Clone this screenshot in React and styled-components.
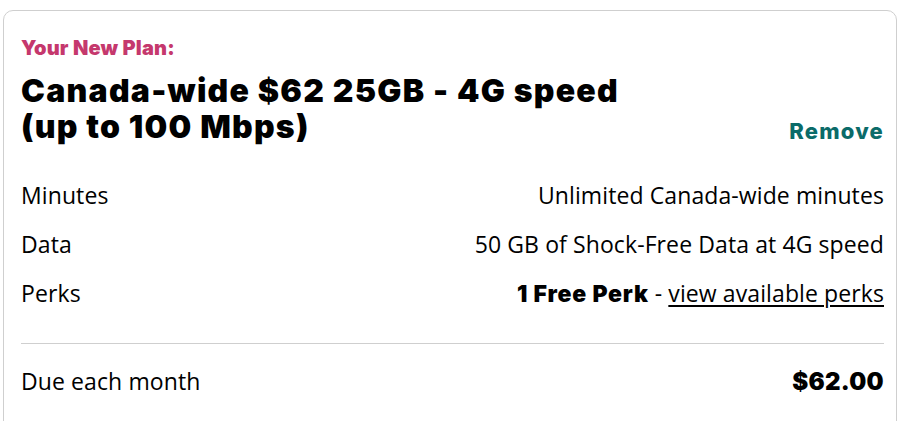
import React from "react";
import styled, { createGlobalStyle } from "styled-components";

const Global = createGlobalStyle`
  html, body { margin: 0; padding: 0; background: #fff; }
  body { font-family: "Open Sans", "Noto Sans", sans-serif; color: #000; overflow: hidden; }
`;

const heavy = `"Inter", "Noto Sans", sans-serif`;

const Card = styled.section`
  margin: 10px 0 0 3px;
  width: 894px;
  box-sizing: border-box;
  border: 1px solid #cfcfcf;
  border-radius: 10px;
  padding: 26px 12px 30px 17px;
  height: 430px;
`;

const Eyebrow = styled.div`
  color: #c5386d;
  font-family: ${heavy};
  font-weight: 900;
  font-size: 20px;
  line-height: 22px;
  letter-spacing: 0.2px;
`;

const Header = styled.div`
  display: flex;
  justify-content: space-between;
  align-items: flex-end;
  margin-top: 14px;
`;

const Title = styled.h1`
  margin: 0;
  font-family: ${heavy};
  font-size: 32px;
  line-height: 36px;
  font-weight: 900;
  letter-spacing: 1.25px;
`;

const RemoveLink = styled.a`
  color: #0b6b69;
  font-family: ${heavy};
  font-weight: 800;
  font-size: 22px;
  line-height: 24px;
  letter-spacing: 1.2px;
  margin-bottom: 2px;
  text-decoration: none;
  cursor: pointer;
`;

const Rows = styled.div`
  display: flex;
  flex-direction: column;
  margin-top: 37px;
  gap: 23px;
`;

const Row = styled.div`
  display: flex;
  justify-content: space-between;
  align-items: baseline;
  font-size: 23px;
  line-height: 26px;
  letter-spacing: 0.1px;
`;

const Strong = styled.strong`
  font-family: ${heavy};
  font-weight: 900;
  letter-spacing: 0.8px;
`;

const Underlined = styled.a`
  color: #000;
  text-decoration: underline;
  text-underline-offset: 3px;
  cursor: pointer;
`;

const Divider = styled.hr`
  border: 0;
  border-top: 1px solid #cfcfcf;
  margin: 36px 0 24px;
`;

const Price = styled.span`
  font-family: ${heavy};
  font-weight: 900;
  font-size: 24px;
  letter-spacing: 0.3px;
`;

export default function App() {
  return (
    <>
      <Global />
      <Card>
        <Eyebrow>Your New Plan:</Eyebrow>
        <Header>
          <Title>
            Canada-wide $62 25GB - 4G speed
            <br />
            (up to 100 Mbps)
          </Title>
          <RemoveLink>Remove</RemoveLink>
        </Header>
        <Rows>
          <Row>
            <span>Minutes</span>
            <span>Unlimited Canada-wide minutes</span>
          </Row>
          <Row>
            <span>Data</span>
            <span>50 GB of Shock-Free Data at 4G speed</span>
          </Row>
          <Row>
            <span>Perks</span>
            <span>
              <Strong>1 Free Perk</Strong> - <Underlined>view available perks</Underlined>
            </span>
          </Row>
        </Rows>
        <Divider />
        <Row>
          <span>Due each month</span>
          <Price>$62.00</Price>
        </Row>
      </Card>
    </>
  );
}
